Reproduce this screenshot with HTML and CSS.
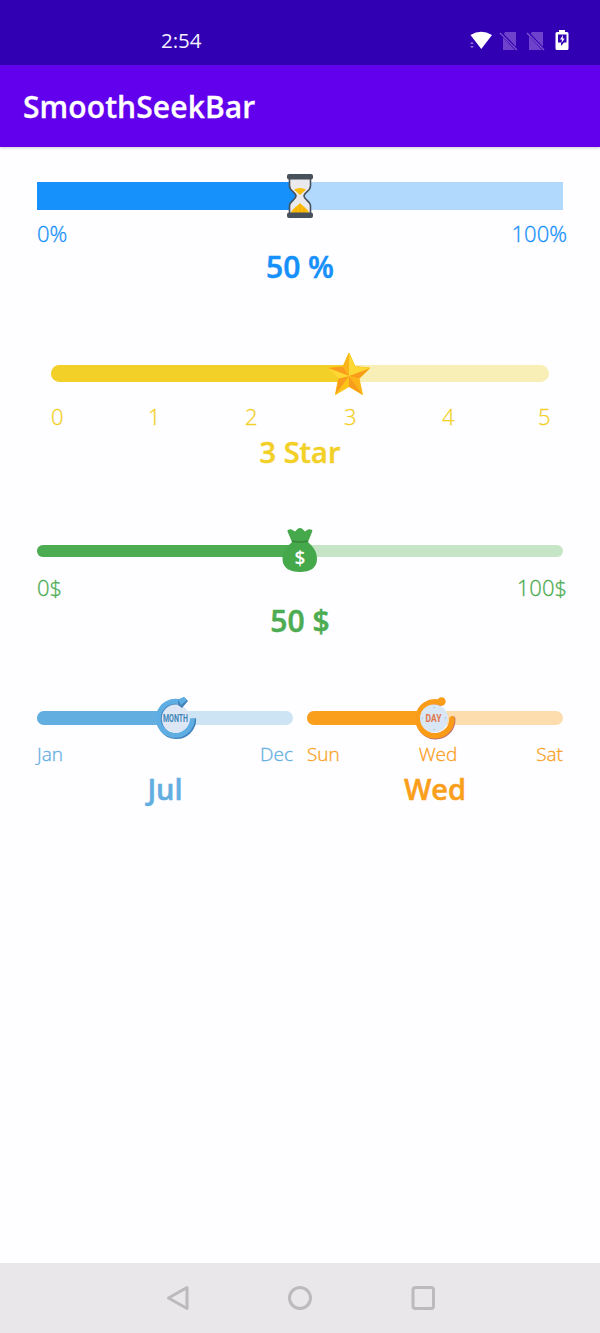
FILE: index.html
```html
<!DOCTYPE html>
<html lang="en">
<head>
<meta charset="utf-8">
<title>SmoothSeekBar</title>
<link rel="stylesheet" href="styles.css">
</head>
<body>
<div class="screen">
  <header class="status">
    <span class="clock">2:54</span>
    <svg class="status-icons" width="104" height="24" viewBox="0 0 104 24">
      <path fill="#fff" d="M1.500 5Q12-1.500 23 5L12.300 19Z"/>
      <path fill="#8a66d4" d="M3 11.500l1.800 2.500H1zM1 16h3.800L3 18.500z"/>
      <path fill="#6f42cb" d="M36 2h11v18H34V6z"/>
      <path stroke="#3200b3" stroke-width="3" d="M31 2l17 18"/>
      <path stroke="#8058d2" stroke-width="1.200" d="M31 3l17 17"/>
      <path fill="#6f42cb" d="M63 2h11v18H60V5z"/>
      <path stroke="#3200b3" stroke-width="3" d="M58 2l17 18"/>
      <path stroke="#8058d2" stroke-width="1.200" d="M58 3l17 17"/>
      <path fill="#fff" d="M90 0h6v2h2q1.500 0 1.500 1.500v15q0 1.500-1.500 1.500H88q-1.500 0-1.500-1.500v-15Q86.500 2 88 2h2z"/>
      <path fill="#3200b3" d="M89 4.500h8.500v8H95L92 16v-3.500h-3z"/>
      <path fill="#fff" d="M94 5l-3 4.500h2L92.500 13l3.200-4.500h-2z"/>
    </svg>
  </header>
  <div class="appbar">SmoothSeekBar</div>

  <main class="content">
    <section class="seek percent">
      <div class="track">
        <div class="fill" style="width:50%"></div>
        <svg class="thumb" style="left:50%" width="44" height="44" viewBox="0 0 44 44">
          <path fill="#e9e9ee" stroke="#46515b" stroke-width="1.600" d="M11.500 4h21v8c0 5-6.500 6.500-6.500 10s6.500 5 6.500 10v8h-21v-8c0-5 6.500-6.500 6.500-10s-6.500-5-6.500-10z"/>
          <path fill="#f8bd0b" d="M16 15.500q6-3 12 0L22 21zM13 39c.5-3.500 5-6 9-10 4 4 8.500 6.500 9 10z"/>
          <path fill="none" stroke="#f59e12" stroke-width=".8" d="M22 31v8M18 34v5M26 34v5"/>
          <rect x="9" y="0" width="26" height="5.500" rx="2" fill="#46515b"/>
          <rect x="9" y="38.500" width="26" height="5.500" rx="2" fill="#46515b"/>
        </svg>
      </div>
      <div class="labels"><span>0%</span><span>100%</span></div>
      <div class="value">50 %</div>
    </section>

    <section class="seek star">
      <div class="track">
        <div class="fill" style="width:60%"></div>
        <svg class="thumb" style="left:60%" width="44" height="44" viewBox="0 0 44 44">
          <path fill="#fcc419" stroke="#fcc419" stroke-linejoin="round" d="M21 1l6 13.500 15 1.500-11 10.500 3.500 16L21 34.500 7.500 42.500l3-16L0 16l15-1.500z"/>
          <path fill="#f99b1c" d="M0 16l15-1.500L21 24zM21 24L10.500 26.500l-3 16zM21 24l13.500 18.500L21 34.500zM21 24l21-8-11 10.500z"/>
          <path fill="#fdd835" d="M21 1v23l6-9.500zM21 24l6-9.500L42 16zM21 24L0 16l10.500 10.500z"/>
          <path fill="#fbb51b" d="M21 1v23l-6-9.500zM21 24l10 2.500 3.500 16z"/>
        </svg>
      </div>
      <div class="labels"><span>0</span><span>1</span><span>2</span><span>3</span><span>4</span><span>5</span></div>
      <div class="value">3 Star</div>
    </section>

    <section class="seek money">
      <div class="track">
        <div class="fill" style="width:50%"></div>
        <svg class="thumb" style="left:50%" width="44" height="44" viewBox="0 0 44 44">
          <path fill="#45a84a" d="M14 14L9.500 3.500Q9 2 11 1.500q2-.5 4 .8L17 3.500 20 .5q2-1 4 0l3 3 2-1.500q2-1.200 4-.5t1.200 2L30 14c5.500 5 9 10 9 17 0 9-7 13-17 13S4.500 40 4.500 31c0-7 4-12 9.500-17z"/>
          <path stroke="#39843c" stroke-width="1.600" d="M14 13q8 2 16 0" fill="none"/>
          <text class="dollar" x="22" y="37">$</text>
        </svg>
      </div>
      <div class="labels"><span>0$</span><span>100$</span></div>
      <div class="value">50 $</div>
    </section>

    <div class="pair">
      <section class="seek month">
        <div class="track">
          <div class="fill" style="width:54.500%"></div>
          <svg class="thumb" style="left:54%" width="44" height="44" viewBox="0 0 44 44">
            <path fill="none" stroke="#4383bb" stroke-width="5.500" d="M29 7.300A17 17 0 1 0 40.400 22.500"/>
            <path fill="none" stroke="#5faee3" stroke-width="5" d="M28 6.300A17 17 0 1 0 39.300 22.500"/>
            <circle cx="22.800" cy="22.500" r="14" fill="#dce6f5"/>
            <path fill="#4383bb" d="M25 4l6-3 4 4-6 7-4-3z"/>
            <path fill="#5faee3" d="M25 3.500l6-2.500 3 3-6 5z"/>
            <text class="dial-text" x="22.500" y="26" textLength="25" lengthAdjust="spacingAndGlyphs">MONTH</text>
          </svg>
        </div>
        <div class="labels"><span>Jan</span><span>Dec</span></div>
        <div class="value">Jul</div>
      </section>
      <section class="seek day">
        <div class="track">
          <div class="fill" style="width:50%"></div>
          <svg class="thumb" style="left:50%" width="44" height="44" viewBox="0 0 44 44">
            <path fill="none" stroke="#bd7270" stroke-width="5.500" stroke-linecap="round" d="M27 7.300A17 17 0 1 0 39.700 23"/>
            <path fill="none" stroke="#fb9c18" stroke-width="5.500" stroke-linecap="round" d="M26 6.300A17 17 0 1 0 39 23"/>
            <circle cx="21" cy="22.500" r="14" fill="#d8e6f5"/>
            <circle cx="28.500" cy="5.500" r="4.200" fill="#fb9c18"/>
            <path fill="none" stroke="#93a8b8" d="M21 11v1M21 33v1M9 22h1M32 22h1"/>
            <text class="dial-text" x="20.500" y="26" textLength="16" lengthAdjust="spacingAndGlyphs">DAY</text>
          </svg>
        </div>
        <div class="labels"><span>Sun</span><span>Wed</span><span>Sat</span></div>
        <div class="value">Wed</div>
      </section>
    </div>
  </main>

  <nav class="navbar">
    <svg width="24" height="26" viewBox="0 0 24 26"><path d="M21 2.500v21L2.500 13z"/></svg>
    <svg width="26" height="26" viewBox="0 0 26 26"><circle cx="13" cy="13" r="10.500"/></svg>
    <svg width="26" height="26" viewBox="0 0 26 26"><rect x="3" y="2.500" width="20.500" height="21" rx="2.500"/></svg>
  </nav>
</div>
</body>
</html>
```
FILE: styles.css
```css
* { box-sizing: border-box; }
body {
  margin: 0;
  font-family: "Open Sans", "Noto Sans", sans-serif;
}
.screen {
  width: 600px;
  height: 1333px;
  display: flex;
  flex-direction: column;
  overflow: hidden;
  background: #fefdff;
}
.status {
  height: 65px;
  flex: none;
  display: flex;
  align-items: center;
  justify-content: space-between;
  padding: 14px 27px 0 161px;
  background: #3200b3;
  color: #f4f0fd;
}
.status-icons { margin-top: 4px; }
.clock { font-size: 20.500px; line-height: 24px; }
.appbar {
  height: 82px;
  flex: none;
  padding: 0 23px;
  background: #6200ee;
  color: #fff;
  font-size: 30px;
  font-weight: 600;
  line-height: 84px;
  letter-spacing: 0.1px;
  -webkit-text-stroke: 0.3px;
  box-shadow: 0 1px 3px #0003;
}
.content { flex: 1; padding: 35px 37px 0; }
.seek { color: var(--c); }
.track {
  position: relative;
  height: var(--h);
  border-radius: var(--r);
  background: var(--bg);
}
.fill {
  height: 100%;
  border-radius: var(--r) 0 0 var(--r);
  background: var(--c);
}
.thumb {
  position: absolute;
  top: 50%;
  transform: translate(-50%, -50%);
  overflow: visible;
}
.labels {
  display: flex;
  justify-content: space-between;
  font-size: 22px;
  font-weight: 300;
  line-height: 24px;
  -webkit-text-stroke: 0.3px;
}
.value {
  font-size: 29px;
  font-weight: 600;
  line-height: 34px;
  text-align: center;
  -webkit-text-stroke: 0.5px;
}
.percent { --c: #1690fb; --bg: #b1d9fe; --h: 28px; --r: 0; }
.percent .labels { margin: 11px -4px 0 0; }
.percent .value { margin-top: 5px; font-size: 30px; }
.star { --c: #f2d027; --bg: #f8efb7; --h: 17px; --r: 9px; margin: 81px 14px 0; }
.star .labels {
  display: grid;
  grid-template-columns: 97px 97px 99px 98px 96px auto;
  justify-content: start;
  margin-top: 22px;
}
.star .value { margin-top: 7px; }
.money { --c: #4bac51; --bg: #c5e5c6; --h: 12px; --r: 6px; margin-top: 76px; }
.money .thumb { margin-top: -1px; }
.money .labels { margin: 18px -4px 0 0; }
.money .value { margin-top: 5px; font-size: 30px; }
.pair {
  display: grid;
  grid-template-columns: 1fr 1fr;
  gap: 14px;
  margin-top: 73px;
}
.month { --c: #62aee1; --bg: #cce4f4; --h: 14px; --r: 7px; }
.day { --c: #fa9f1c; --bg: #fddcae; --h: 14px; --r: 7px; }
.pair .labels { margin-top: 17px; font-size: 19px; }
.pair .value { margin-top: 6px; }
.dollar {
  fill: #fff;
  font-size: 19px;
  font-weight: 600;
  text-anchor: middle;
}
.dial-text {
  font: 700 10px "Roboto", sans-serif;
  text-anchor: middle;
  fill: #3e86b8;
}
.day .dial-text { fill: #e0764a; }
.navbar {
  height: 70px;
  flex: none;
  display: flex;
  align-items: center;
  justify-content: space-between;
  padding: 0 164px 0 166px;
  background: #e9e7ea;
}
.navbar svg { fill: none; stroke: #bcbabd; stroke-width: 3; stroke-linejoin: round; }
```
